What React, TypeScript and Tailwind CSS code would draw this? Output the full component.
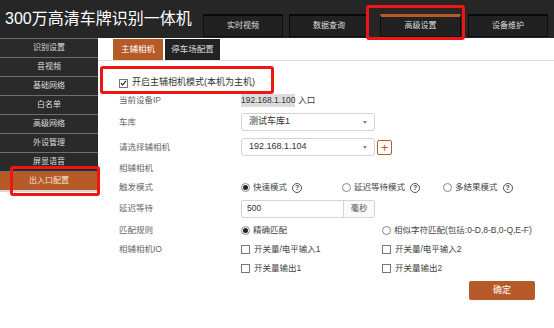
import { ReactNode } from 'react'

const topTabs = ['实时视频', '数据查询', '高级设置', '设备维护']
const sideItems = ['识别设置', '音视频', '基础网络', '白名单', '高级网络', '外设管理', '屏显语音']

function Radio({ checked }: { checked?: boolean }) {
  return (
    <span className="w-[9px] h-[9px] rounded-full border border-[#888] bg-white flex items-center justify-center shrink-0">
      {checked && <span className="w-[5px] h-[5px] rounded-full bg-[#222]" />}
    </span>
  )
}

function Box({ checked }: { checked?: boolean }) {
  return (
    <span className="w-[9px] h-[9px] border border-[#777] bg-white flex items-center justify-center shrink-0">
      {checked && (
        <svg width="8" height="8" viewBox="0 0 8 8">
          <path d="M1 4.2 L3 6.2 L7 1.5" fill="none" stroke="#222" strokeWidth="1.3" />
        </svg>
      )}
    </span>
  )
}

function Help() {
  return (
    <span className="w-[10px] h-[10px] rounded-full border border-[#555] text-[7px] leading-none text-[#444] flex items-center justify-center ml-[5px] font-bold">?</span>
  )
}

function Row({ h, label, children }: { h: string, label?: string, children?: ReactNode }) {
  return (
    <div className={`flex items-center ${h}`}>
      <div className="w-[122px] shrink-0 text-[#666]">{label}</div>
      <div className="flex items-center flex-1">{children}</div>
    </div>
  )
}

function Select({ value }: { value: string }) {
  return (
    <div className="w-[134px] h-[18px] border border-[#d4d4d4] rounded-[3px] bg-white flex items-center pl-[7px] pr-[7px] justify-between text-[9px] text-[#333]">
      <span>{value}</span>
      <span className="w-0 h-0 border-l-[2.5px] border-r-[2.5px] border-t-[3px] border-l-transparent border-r-transparent border-t-[#888]" />
    </div>
  )
}

export default function App() {
  return (
    <div className="relative w-[554px] h-[328px] bg-white overflow-hidden font-['Liberation_Sans','Noto_Sans_CJK_SC',sans-serif] text-[8.5px] text-[#444]">
      {/* header */}
      <div className="h-[38px] bg-[#262626] flex items-center">
        <div className="pl-[5px] w-[203px] text-white text-[16px] leading-none pb-[1px]">300万高清车牌识别一体机</div>
        <div className="flex gap-[6px] pt-[12px]">
          {topTabs.map((t, i) => (
            <div
              key={t}
              className={`h-[23px] flex items-center justify-center text-[8px] text-[#ddd] bg-[#212121] border border-[#0e0e0e] ${i === 2 ? 'border-t-[3px] border-t-[#b65b27] w-[81px] ml-[5px] mr-[1px]' : 'border-t-[2px] border-t-[#080808] w-[80px]'}`}
            >
              {t}
            </div>
          ))}
        </div>
      </div>

      <div className="flex">
        {/* sidebar */}
        <div className="w-[98px] shrink-0">
          {sideItems.map(s => (
            <div key={s} className="h-[19px] border-t border-[#6e6e6e] bg-[#2a2a2a] text-[#ddd] text-[8px] flex items-center justify-center">{s}</div>
          ))}
          <div className="h-[19px] border-t border-[#6e6e6e] bg-[#b65b27] text-[#f5e6dc] text-[8px] flex items-center justify-center">出入口配置</div>
          <div className="h-[2px] bg-[#d8d8d8]" />
        </div>

        {/* content */}
        <div className="flex-1">
          <div className="flex items-end gap-[2px] pl-[15px] pt-[2px] border-b border-[#dedede] h-[23px]">
            <div className="w-[50px] h-[21px] bg-[#b65b27] text-white text-[8.5px] flex items-center justify-center">主辅相机</div>
            <div className="w-[55px] h-[21px] bg-[#222] text-[#ddd] text-[8.5px] flex items-center justify-center">停车场配置</div>
          </div>

          <div className="pl-[21px] pr-[19px]">
            <div className="flex items-center h-[18px] mt-[13px] text-[9px] text-[#333]">
              <Box checked />
              <span className="ml-[4px]">开启主辅相机模式(本机为主机)</span>
            </div>
            <Row h="h-[17px]" label="当前设备IP">
              <span className="bg-[#dcdcdc] text-[#333]">192.168.1.100</span>
              <span className="ml-[3px] text-[#333]">入口</span>
            </Row>
            <Row h="h-[26px]" label="车库"><Select value="测试车库1" /></Row>
            <Row h="h-[24px]" label="请选择辅相机">
              <Select value="192.168.1.104" />
              <span className="ml-[2px] w-[15px] h-[15px] border border-[#b65b27] rounded-[2px] text-[#b65b27] text-[13px] leading-none flex items-center justify-center">+</span>
            </Row>
            <Row h="h-[19px]" label="相辅相机" />
            <Row h="h-[19px]" label="触发模式">
              <div className="w-[101px] flex items-center"><Radio checked /><span className="ml-[3px]">快速模式</span><Help /></div>
              <div className="w-[101px] flex items-center"><Radio /><span className="ml-[3px]">延迟等待模式</span><Help /></div>
              <div className="flex items-center"><Radio /><span className="ml-[3px]">多结果模式</span><Help /></div>
            </Row>
            <Row h="h-[23px]" label="延迟等待">
              <div className="w-[134px] h-[18px] border border-[#d4d4d4] rounded-[2px] flex items-center">
                <span className="flex-1 pl-[5px] text-[#333]">500</span>
                <span className="w-[31px] h-full border-l border-[#d4d4d4] bg-[#fafafa] flex items-center justify-center text-[#555]">毫秒</span>
              </div>
            </Row>
            <Row h="h-[20px]" label="匹配规则">
              <div className="w-[141px] flex items-center"><Radio checked /><span className="ml-[3px]">精确匹配</span></div>
              <div className="flex items-center"><Radio /><span className="ml-[3px]">相似字符匹配(包括:0-D,8-B,0-Q,E-F)</span></div>
            </Row>
            <Row h="h-[18px]" label="相辅相机IO">
              <div className="w-[141px] flex items-center"><Box /><span className="ml-[4px]">开关量/电平输入1</span></div>
              <div className="flex items-center"><Box /><span className="ml-[4px]">开关量/电平输入2</span></div>
            </Row>
            <Row h="h-[20px]">
              <div className="w-[141px] flex items-center"><Box /><span className="ml-[4px]">开关量输出1</span></div>
              <div className="flex items-center"><Box /><span className="ml-[4px]">开关量输出2</span></div>
            </Row>
            <div className="flex justify-end mt-[3px]">
              <div className="w-[66px] h-[19px] bg-[#b65b27] rounded-[2px] text-white text-[9px] flex items-center justify-center">确定</div>
            </div>
          </div>
        </div>
      </div>

      {/* annotation boxes */}
      <div className="absolute left-[366px] top-[5px] w-[99px] h-[35px] border-[3px] border-[#f01414] rounded-[3px]" />
      <div className="absolute left-[100px] top-[66px] w-[174px] h-[28px] border-[3px] border-[#f01414] rounded-[3px]" />
      <div className="absolute left-[10px] top-[166px] w-[90px] h-[30px] border-[3px] border-[#f01414] rounded-[3px]" />
    </div>
  )
}
